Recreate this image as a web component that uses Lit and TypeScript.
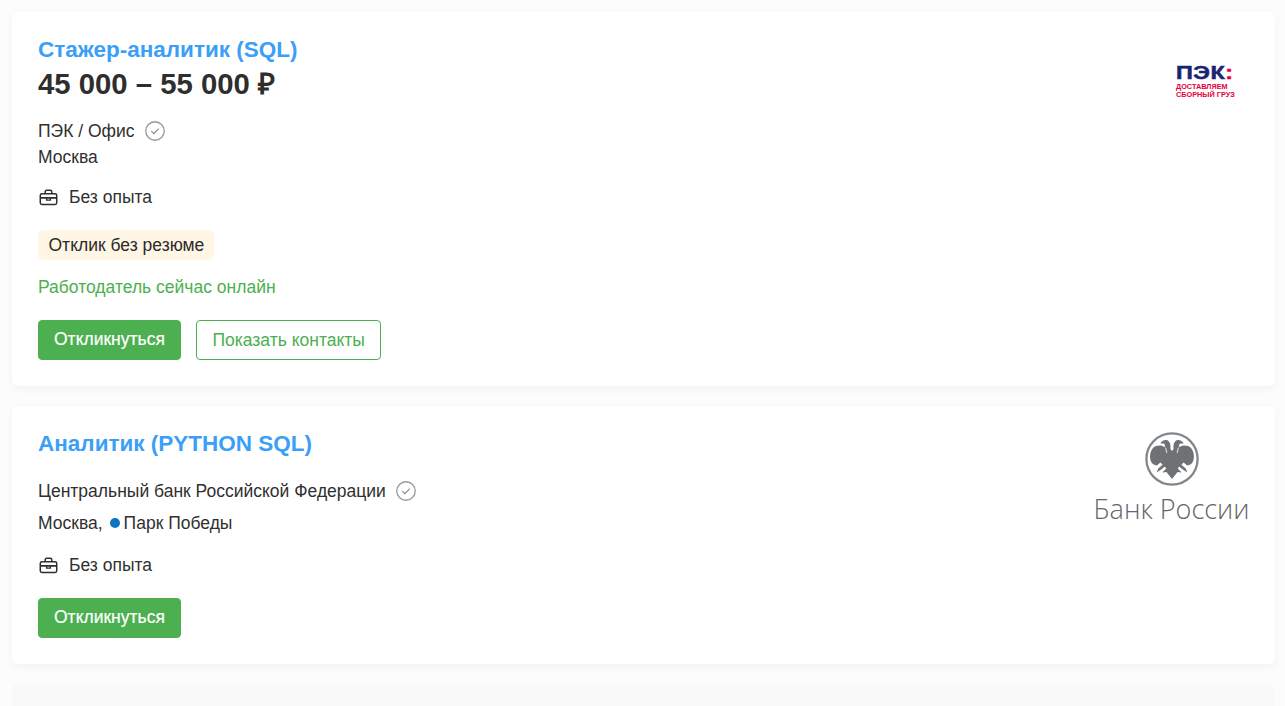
import { LitElement, html, css } from "lit";
import { customElement } from "lit/decorators.js";

const check = html`<svg class="check" viewBox="0 0 20 20" fill="none"><circle cx="10" cy="10" r="9.25" stroke="#999" stroke-width="1.3"/><path d="M6.3 10.2l2.6 2.5 4.8-5" stroke="#888" stroke-width="1.1"/></svg>`;
const bag = html`<svg class="bag" viewBox="0 0 20 18" fill="none" stroke="#2f2f2f" stroke-width="1.6"><rect x="1.3" y="5" width="17.4" height="11.4" rx="1.8"/><path d="M6.5 5V3.2C6.5 2 7.2 1.4 8.2 1.4h3.6c1 0 1.7.6 1.7 1.8V5M1.3 9.4h17.4"/><path d="M8 9.4v2.3h4V9.4" stroke-width="1.4"/></svg>`;
const eagleHalf = "M27 19L25.4 17C26 12.5 24.6 8.6 21.4 8C18.8 7.6 16.8 9.2 15.2 11.4L18.2 11.4C19.8 11.6 20.2 13 19.8 15.2C16.4 12.8 11.2 13.2 8 16C5 19.5 4.2 25 6 29.6C7 31.8 9 33.2 11.8 33.6L15.4 30.6L17.6 32.8L13.2 36.6L11.8 40.4L16.2 37.6L19.8 34.4L21.2 36.6L17.4 40.6L21.4 40L23.4 42.6L27 47Z";

@customElement("app-root")
export class AppRoot extends LitElement {
  static styles = css`
    :host {
      display: block;
      height: 706px;
      overflow: hidden;
      background: #fcfcfc;
      font-family: "Liberation Sans", Arial, sans-serif;
      font-size: 17.5px;
      color: #303030;
    }
    .list { display: flex; flex-direction: column; gap: 20px; padding: 12px 10px 0 12px; }
    .card {
      display: flex;
      justify-content: space-between;
      background: #fff;
      border-radius: 6px;
      padding: 26px 25px 26px 26px;
      box-shadow: 0 3px 10px rgba(0, 0, 0, 0.04);
    }
    .ghost { height: 120px; padding: 0; background: #f9f9f9; box-shadow: none; }
    .title { font-size: 22.5px; line-height: 24px; font-weight: 700; color: #3b9ff7; }
    .salary { margin-top: 4px; font-size: 29.3px; line-height: 36px; font-weight: 700; color: #2e2e2e; }
    .company { display: flex; align-items: center; gap: 10px; line-height: 26px; }
    .company.first { margin-top: 16px; gap: 11px; }
    .company.second { margin-top: 22px; }
    .check { width: 20px; height: 20px; }
    .loc { line-height: 26px; }
    .loc.metro { margin-top: 6px; display: flex; align-items: center; }
    .dot { width: 10px; height: 10px; border-radius: 50%; background: #0b75c4; margin: 0 4px 0 7px; }
    .exp { display: flex; align-items: center; gap: 11px; line-height: 24px; }
    .exp.a { margin-top: 15px; }
    .exp.b { margin-top: 17px; }
    .bag { width: 19px; height: 17px; margin-left: 1px; }
    .tag {
      display: inline-block;
      margin-top: 21px;
      height: 30px;
      line-height: 30px;
      padding: 0 9.5px 0 10.5px;
      border-radius: 5px;
      background: #fff6e5;
      color: #2b2b2b;
    }
    .tagrow { display: flex; }
    .online { margin-top: 15px; line-height: 24px; color: #4caf50; }
    .actions { display: flex; gap: 15px; margin-top: 21px; }
    .btn {
      box-sizing: border-box;
      height: 40px;
      line-height: 38px;
      padding: 0 15.5px;
      border-radius: 4px;
      border: 1px solid #4caf50;
      color: #4caf50;
    }
    .btn.primary { background: #4caf50; color: #fff; line-height: 36px; padding: 0 15px; -webkit-text-stroke: 0.2px #fff; }
    .logo { flex: none; width: 157px; display: flex; flex-direction: column; align-items: center; }
    .logo.pek { height: 88px; justify-content: center; align-items: flex-end; padding-right: 16px; box-sizing: border-box; }
    .pekwrap { width: 58px; font-weight: 700; color: #e5003c; }
    .pekname {
      font-size: 18px;
      line-height: 14px;
      color: #1a2470;
      letter-spacing: 0.4px;
      white-space: nowrap;
      transform: scaleX(1.3);
      transform-origin: left center;
      -webkit-text-stroke: 0.5px currentColor;
    }
    .pekname span { color: #e5003c; }
    .pekline { font-size: 7.3px; line-height: 7.5px; white-space: nowrap; }
    .pekline.l1 { margin-top: 3px; }
    .emblem { width: 54px; height: 54px; }
    .bank {
      margin-top: 6px;
      font-family: "Open Sans", sans-serif;
      font-weight: 300;
      font-size: 27px;
      line-height: 34px;
      color: #63666a;
      white-space: nowrap;
    }
  `;

  render() {
    return html`
      <div class="list">
        <article class="card">
          <div>
            <div class="title">Стажер-аналитик (SQL)</div>
            <div class="salary">45 000 – 55 000 ₽</div>
            <div class="company first"><span>ПЭК / Офис</span>${check}</div>
            <div class="loc">Москва</div>
            <div class="exp a">${bag}<span>Без опыта</span></div>
            <div class="tagrow"><span class="tag">Отклик без резюме</span></div>
            <div class="online">Работодатель сейчас онлайн</div>
            <div class="actions">
              <div class="btn primary">Откликнуться</div>
              <div class="btn">Показать контакты</div>
            </div>
          </div>
          <div class="logo pek">
            <div class="pekwrap">
              <div class="pekname">ПЭК<span>:</span></div>
              <div class="pekline l1">ДОСТАВЛЯЕМ</div>
              <div class="pekline">СБОРНЫЙ ГРУЗ</div>
            </div>
          </div>
        </article>
        <article class="card">
          <div>
            <div class="title">Аналитик (PYTHON SQL)</div>
            <div class="company second"><span>Центральный банк Российской Федерации</span>${check}</div>
            <div class="loc metro">Москва,<span class="dot"></span>Парк Победы</div>
            <div class="exp b">${bag}<span>Без опыта</span></div>
            <div class="actions"><div class="btn primary">Откликнуться</div></div>
          </div>
          <div class="logo">
            <svg class="emblem" viewBox="0 0 54 54">
              <circle cx="27" cy="27" r="25.6" fill="none" stroke="#84878a" stroke-width="2.3"/>
              <path d=${eagleHalf} fill="#6f7275"/>
              <path d=${eagleHalf} fill="#6f7275" transform="matrix(-1 0 0 1 54 0)"/>
              <path d="M20.6 15.6L21.8 21M33.4 15.6L32.2 21" fill="none" stroke="#fff" stroke-width="0.8"/>
            </svg>
            <div class="bank">Банк России</div>
          </div>
        </article>
        <article class="card ghost"></article>
      </div>
    `;
  }
}
